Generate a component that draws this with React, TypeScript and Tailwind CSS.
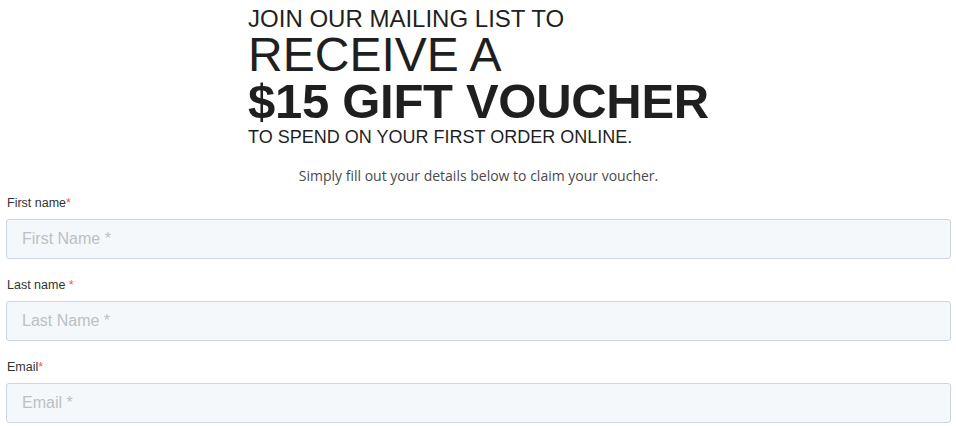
import React from "react";

function Field({ label, placeholder, spaceStar }: { label: string; placeholder: string; spaceStar?: boolean }) {
  return (
    <div className="flex flex-col">
      <label className="text-[12.5px] leading-[16px] text-[#333333] pl-[1px]" style={{ fontFamily: '"Liberation Sans", Arial, sans-serif' }}>
        {label}
        {spaceStar ? " " : ""}
        <span className="text-[#f2545b]">*</span>
      </label>
      <input
        className="mt-[8px] h-[40px] w-full rounded-[3px] border border-[#cbd6e2] bg-[#f5f8fa] px-[15px] text-[16px] text-[#33475b] placeholder:text-[#bcc0c4] outline-none"
        style={{ fontFamily: '"Liberation Sans", Arial, sans-serif' }}
        placeholder={placeholder}
      />
    </div>
  );
}

export default function App() {
  return (
    <div className="min-h-[426px] w-full bg-white pl-[6px] pr-[5px]">
      <div className="flex justify-center pt-[7px]">
        <div className="text-left text-[#1f1f1f]" style={{ fontFamily: '"Liberation Sans", Arial, sans-serif' }}>
          <div className="text-[24px] leading-[24px]">JOIN OUR MAILING LIST TO</div>
          <div className="text-[48px] leading-[47px]">RECEIVE A</div>
          <div className="text-[49px] leading-[47px] font-bold tracking-[-0.3px]">$15 GIFT VOUCHER</div>
          <div className="text-[18px] leading-[24px]">TO SPEND ON YOUR FIRST ORDER ONLINE.</div>
        </div>
      </div>
      <p className="mt-[17px] text-center text-[14px] leading-[20px] text-[#4a4a4a]" style={{ fontFamily: '"Open Sans", sans-serif' }}>
        Simply fill out your details below to claim your voucher.
      </p>
      <div className="mt-[9px] flex flex-col gap-[18px]">
        <Field label="First name" placeholder="First Name *" />
        <Field label="Last name" placeholder="Last Name *" spaceStar />
        <Field label="Email" placeholder="Email *" />
      </div>
    </div>
  );
}
